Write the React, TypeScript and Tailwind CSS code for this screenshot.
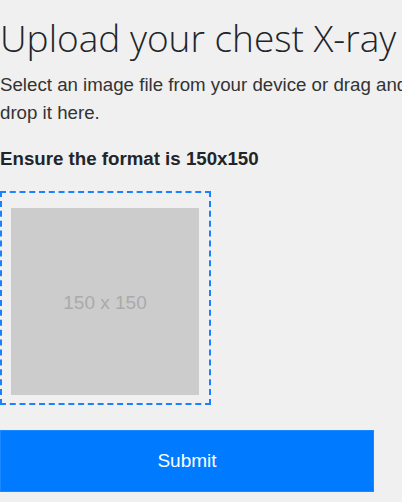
export default function App() {
  return (
    <div className="min-h-screen w-full overflow-hidden bg-[#f0f0f0] font-['Liberation_Sans',Arial,sans-serif]">
      <div className="w-[430px]">
        <h1 className="pt-[14px] font-['Open_Sans',sans-serif] text-[37px] font-light leading-[48px] text-[#212529]">
          Upload your chest X-ray
        </h1>
        <p className="mt-[9px] text-[18.7px] leading-[28px] text-[#333]">
          Select an image file from your device or drag and drop it here.
        </p>
        <p className="mt-[20px] text-[18.7px] font-bold leading-[24px] text-[#212529]">
          Ensure the format is 150x150
        </p>
        <div className="mt-[20px] w-[211px] h-[214px] border-2 border-dashed border-[#1a82ff] pt-[15px] pl-[9px]">
          <div className="flex h-[187px] w-[188px] items-center justify-center bg-[#cccccc] pt-[4px] text-[19px] text-[#aaaaaa]">
            150 x 150
          </div>
        </div>
        <button
          type="button"
          className="mt-[25px] h-[62px] w-[374px] border border-[#1a88ff] bg-[#007bff] text-[19px] text-white"
        >
          Submit
        </button>
      </div>
    </div>
  );
}
